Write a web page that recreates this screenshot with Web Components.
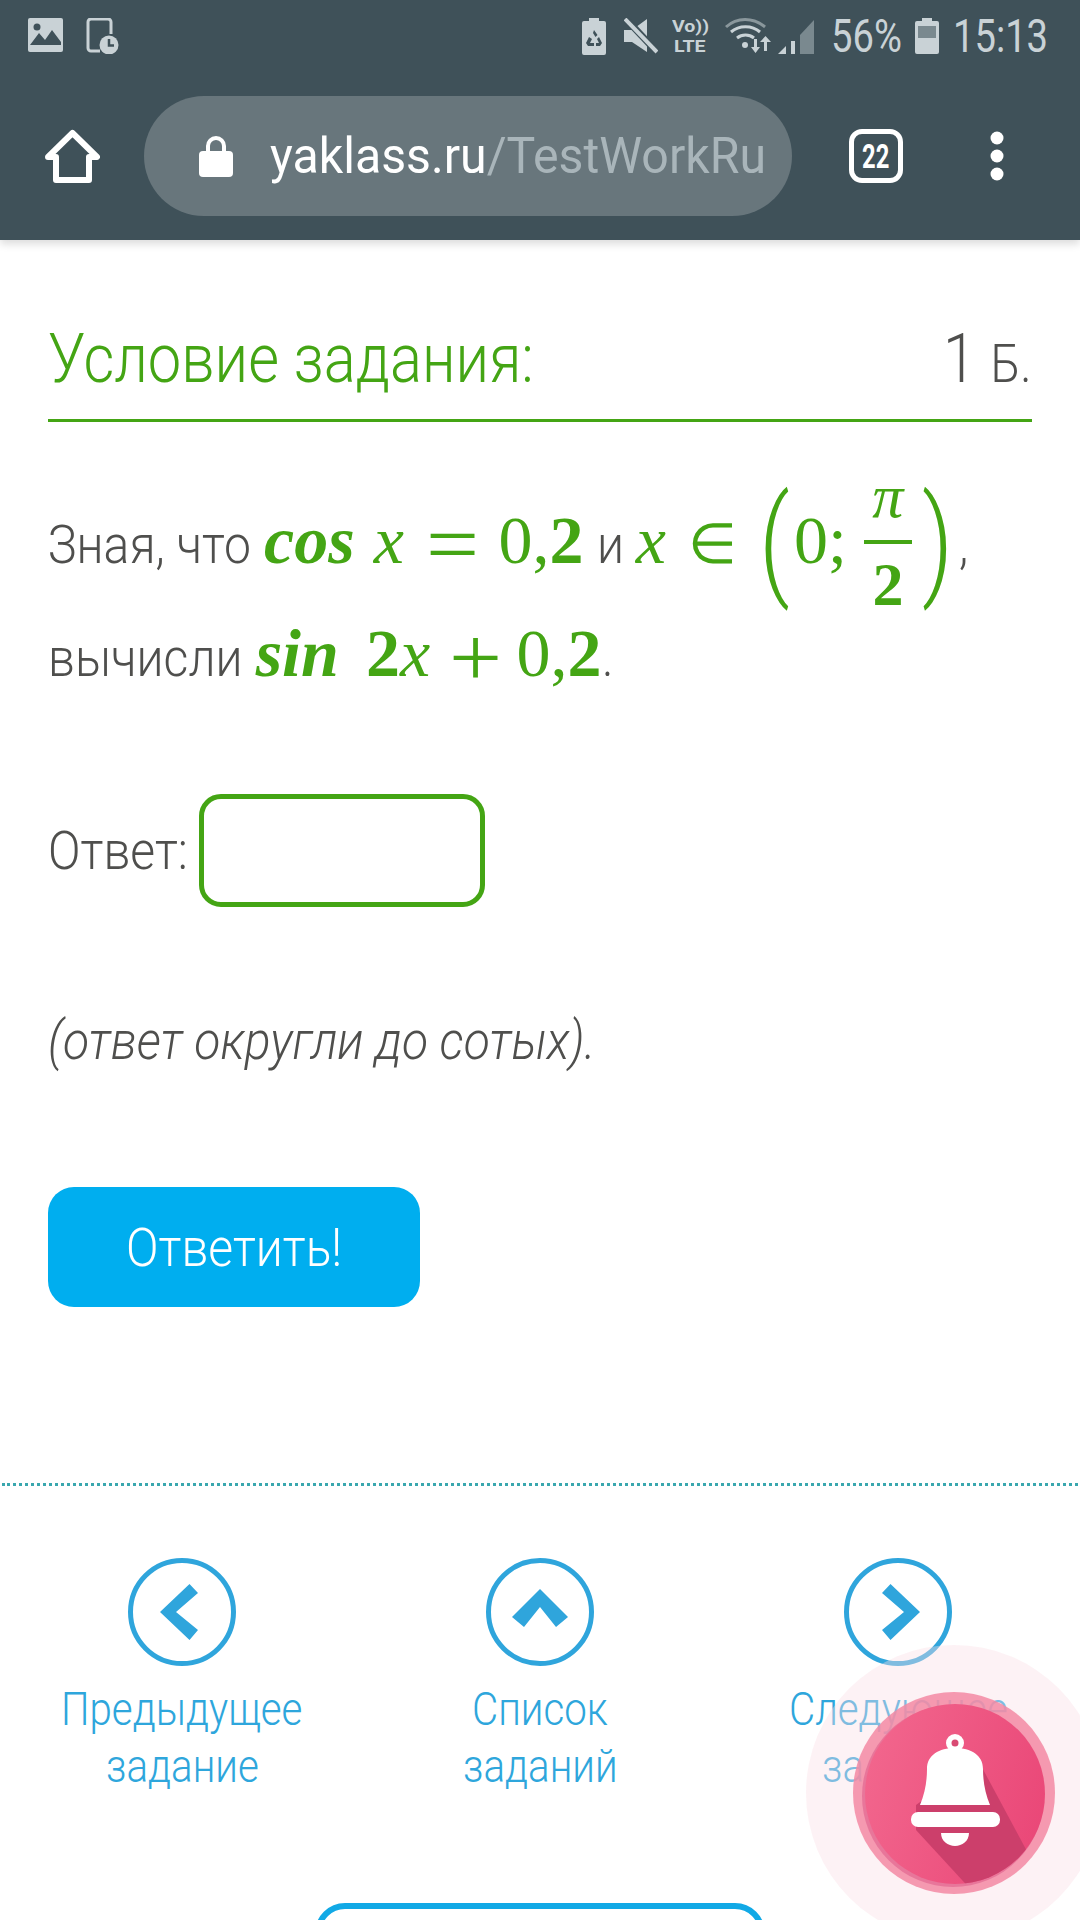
<!DOCTYPE html>
<html lang="ru">
<head>
<meta charset="utf-8">
<title>ЯКласс</title>
<style>
  html, body { margin: 0; padding: 0; background: #fff; }
  body { width: 1080px; height: 1920px; overflow: hidden; position: relative; font-family: Roboto, "Liberation Sans", sans-serif; font-weight: 300; color: #4f4f4d; }
</style>
</head>
<body>

<app-header></app-header>
<task-panel></task-panel>
<task-nav></task-nav>
<notify-bell></notify-bell>

<script>
/* === texto estrecho: the reference font is condensed, so squeeze and keep the real width === */
class NarrowText extends HTMLElement {
  constructor() {
    super();
    this.attachShadow({ mode: 'open' }).innerHTML = `
      <style>
        :host { display: inline-block; white-space: nowrap; }
        span { display: inline-block; transform-origin: 0 50%; transform: scaleX(var(--sx, .8)); }
      </style>
      <span><slot></slot></span>`;
  }
  connectedCallback() {
    const inner = this.shadowRoot.querySelector('span');
    this.style.width = inner.getBoundingClientRect().width + 'px';
  }
}
customElements.define('narrow-text', NarrowText);

/* === cabecera === */
class AppHeader extends HTMLElement {
  constructor() {
    super();
    this.attachShadow({ mode: 'open' }).innerHTML = `
      <style>
        :host { display: block; height: 240px; background: #3f5159; box-shadow: 0 4px 8px rgba(0,0,0,.14); color: #c9d2d6; font-family: Roboto, sans-serif; font-weight: 400; }
        svg { display: block; flex: none; }
        .status { height: 72px; display: flex; align-items: center; padding: 0 32px 0 28px; font-size: 46px; --sx: .83; }
        .status .left { display: flex; gap: 23px; margin-right: auto; }
        .status .right { display: flex; align-items: center; }
        .volte { width: 36px; margin-right: 17px; display: flex; flex-direction: column; align-items: center; font-size: 17px; line-height: 20px; font-weight: 700; --sx: 1.15; }
        .toolbar { height: 168px; display: flex; align-items: center; padding: 0 0 24px 45px; }
        .pill { width: 648px; height: 120px; box-sizing: border-box; margin-left: 44px; padding-left: 55px; border-radius: 60px; background: #68767c; display: flex; align-items: center; overflow: hidden; font-size: 50px; color: #a9b5ba; --sx: .965; }
        .pill b { font-weight: 400; color: #fff; }
        .tabs { width: 54px; height: 54px; box-sizing: border-box; margin-left: 57px; border: 5px solid #fff; border-radius: 13px; display: flex; align-items: center; justify-content: center; color: #fff; font-size: 33px; font-weight: 700; --sx: .72; }
        .dots { margin-left: 87px; }
      </style>
      <div class="status">
        <div class="left">
          <svg width="35" height="34" viewBox="0 0 35 34"><rect width="35" height="34" rx="2" fill="#c9d2d6"/><circle cx="9" cy="9" r="3.500" fill="#3f5159"/><path d="M2 27 L11 15 L17 22 L24 12 L33 24 V30 H2Z" fill="#3f5159"/><rect x="2" y="27" width="31" height="5" fill="#c9d2d6"/></svg>
          <svg width="33" height="36" viewBox="0 0 33 36"><path d="M14 33 H5 a3 3 0 0 1 -3-3 V4 a3 3 0 0 1 3-3 H22 a3 3 0 0 1 3 3 V16" fill="none" stroke="#c9d2d6" stroke-width="3"/><circle cx="23" cy="27" r="9.500" fill="#c9d2d6"/><path d="M23 21 V27.500 H28" fill="none" stroke="#3f5159" stroke-width="2.500"/></svg>
        </div>
        <div class="right">
          <svg width="24" height="37" viewBox="0 0 24 37" style="margin-right:18px"><path d="M7 0 H17 V3 H22 a2 2 0 0 1 2 2 V35 a2 2 0 0 1-2 2 H2 a2 2 0 0 1-2-2 V5 a2 2 0 0 1 2-2 H7Z" fill="#c9d2d6"/><path d="M12 12 L15.500 17 L13.500 19 L11 15 Z M7 19 L10 21 L8 25 H12 V28 H6 L4 25Z M17 19 L20 25 L18 28 H14 V25 H17 L15 21Z" fill="#3f5159"/></svg>
          <svg width="34" height="36" viewBox="0 0 34 36" style="margin-right:14px"><path d="M0 12 H8 L23 1 V34 L8 24 H0Z" fill="#c9d2d6"/><path d="M2 1 L33 34" stroke="#3f5159" stroke-width="7"/><path d="M1 1 L33 34" stroke="#c9d2d6" stroke-width="4"/></svg>
          <div class="volte"><narrow-text>Vo))</narrow-text><narrow-text>LTE</narrow-text></div>
          <svg width="48" height="36" viewBox="0 0 48 36" style="margin-right:5px"><g fill="none" stroke="#c9d2d6"><path d="M1 9 C12 -1 28 -1 40 9" stroke="#8a979c" stroke-width="3"/><path d="M6 14 C14 7 27 7 35 14" stroke-width="3"/><path d="M12 20 C17 16 24 16 29 20" stroke-width="3"/></g><circle cx="20" cy="27" r="3" fill="#c9d2d6"/><path d="M29 21 h3 v8 h3 l-4.500 6 l-4.500-6 h3Z M39 33 h3 v-9 h4 l-5.500-6 l-5.500 6 h4Z" fill="#c9d2d6"/></svg>
          <svg width="36" height="36" viewBox="0 0 36 36" style="margin-right:17px"><path d="M0 36 L8 28 V36Z M13 23 H17 V36 H13Z" fill="#c9d2d6"/><path d="M22 17 L36 2 V36 H22Z" fill="#7a898f"/></svg>
          <narrow-text>56%</narrow-text>
          <svg width="24" height="36" viewBox="0 0 24 36" style="margin:0 14px 0 13px"><path d="M7 0 H17 V3 H22 a2 2 0 0 1 2 2 V34 a2 2 0 0 1-2 2 H2 a2 2 0 0 1-2-2 V5 a2 2 0 0 1 2-2 H7Z" fill="#c9d2d6"/><rect x="3" y="8" width="18" height="12" fill="#7a898f"/></svg>
          <narrow-text>15:13</narrow-text>
        </div>
      </div>
      <div class="toolbar">
        <svg width="55" height="55" viewBox="0 0 55 55"><path d="M27.500 4 L52 28 H44 V51 H11 V28 H3Z" fill="none" stroke="#fff" stroke-width="6" stroke-linejoin="round"/></svg>
        <div class="pill">
          <svg width="34" height="42" viewBox="0 0 34 42" style="margin-right:37px"><path d="M9 18 V11 a8 8 0 0 1 16 0 V18" fill="none" stroke="#fff" stroke-width="4"/><rect y="16" width="34" height="26" rx="4" fill="#fff"/></svg>
          <narrow-text><b>yaklass.ru</b>/TestWorkRu</narrow-text>
        </div>
        <div class="tabs"><narrow-text>22</narrow-text></div>
        <svg class="dots" width="14" height="50" viewBox="0 0 14 50"><circle cx="7" cy="7" r="6.500" fill="#fff"/><circle cx="7" cy="25" r="6.500" fill="#fff"/><circle cx="7" cy="43" r="6.500" fill="#fff"/></svg>
      </div>`;
  }
}
customElements.define('app-header', AppHeader);

/* === condicion de la tarea === */
class TaskPanel extends HTMLElement {
  constructor() {
    super();
    this.attachShadow({ mode: 'open' }).innerHTML = `
      <style>
        :host { display: block; padding: 0 48px; --sx: .89; color: #4f4f4d; font-family: Roboto, sans-serif; font-weight: 300; font-size: 54px; }
        .head { height: 182px; box-sizing: border-box; padding-bottom: 20px; border-bottom: 3px solid #44a514; display: flex; justify-content: space-between; align-items: flex-end; font-size: 68px; color: #44a514; --sx: .877; }
        .head .pts { color: #4f4f4d; }
        .pts small { font-size: 54px; }
        .line { display: block; white-space: nowrap; height: 110px; line-height: 110px; }
        .first { margin-top: 52px; height: 124px; }
        .m { font-family: "Liberation Serif", serif; font-weight: 400; color: #44a514; font-size: 68px; --sx: 1; }
        .i { font-style: italic; }
        .b { font-weight: 700; }
        .op { font-size: 84px; line-height: 0; vertical-align: -10px; --sx: 1.12; }
        .in { font-family: "DejaVu Sans", "Liberation Serif", serif; font-weight: 200; font-size: 56px; --sx: 1; }
        .paren { font-family: Roboto, sans-serif; font-weight: 300; font-size: 120px; line-height: 0; vertical-align: -20px; --sx: .8; }
        .frac { display: inline-flex; flex-direction: column; align-items: center; vertical-align: 46px; margin: 0 10px 0 17px; }
        .frac .num, .frac .den { font-size: 62px; line-height: 44px; }
        .frac hr { width: 48px; height: 4px; border: 0; margin: 22px 0 18px; background: #44a514; }
        .answer { margin-top: 86px; display: flex; align-items: center; gap: 11px; }
        .answer .box { width: 286px; height: 113px; box-sizing: border-box; border: 5px solid #44a514; border-radius: 22px; }
        .hint { margin-top: 104px; font-style: italic; line-height: 60px; }
        .send { margin-top: 116px; width: 372px; height: 120px; border-radius: 26px; background: #00aeef; color: #fff; display: flex; align-items: center; justify-content: center; }
      </style>
      <div class="head">
        <narrow-text>Условие задания:</narrow-text>
        <span class="pts"><narrow-text>1 <small>Б.</small></narrow-text></span>
      </div>
      <div class="line first">
        <narrow-text>Зная, что</narrow-text>
        <narrow-text class="m i b">cos</narrow-text>
        <narrow-text class="m i" style="margin-left:6px">x</narrow-text>
        <narrow-text class="m op" style="margin-left:9px">=</narrow-text>
        <narrow-text class="m" style="margin-left:6px">0,<span class="b">2</span></narrow-text>
        <narrow-text>и</narrow-text>
        <narrow-text class="m i" style="margin-left:-1px">x</narrow-text>
        <narrow-text class="m in" style="margin-left:9px">∈</narrow-text>
        <narrow-text class="m paren" style="margin-left:9px">(</narrow-text><narrow-text class="m" style="margin-left:4px">0;</narrow-text><span class="frac"><narrow-text class="m i num">π</narrow-text><hr><narrow-text class="m b den">2</narrow-text></span><narrow-text class="m paren">)</narrow-text><narrow-text style="margin-left:6px">,</narrow-text>
      </div>
      <div class="line">
        <narrow-text>вычисли</narrow-text>
        <narrow-text class="m i b">sin</narrow-text>
        <narrow-text class="m b" style="margin-left:14px">2</narrow-text><narrow-text class="m i">x</narrow-text>
        <narrow-text class="m op" style="margin-left:6px">+</narrow-text>
        <narrow-text class="m" style="margin-left:1px">0,<span class="b">2</span></narrow-text><narrow-text>.</narrow-text>
      </div>
      <div class="answer"><narrow-text>Ответ:</narrow-text><div class="box"></div></div>
      <div class="hint"><narrow-text>(ответ округли до сотых).</narrow-text></div>
      <div class="send"><narrow-text>Ответить!</narrow-text></div>`;
  }
}
customElements.define('task-panel', TaskPanel);

/* === enlace con circulo === */
class NavLink extends HTMLElement {
  constructor() {
    super();
    this.attachShadow({ mode: 'open' }).innerHTML = `
      <style>
        :host { display: flex; flex-direction: column; align-items: center; color: #2ea6dc; font-size: 46px; line-height: 57px; text-align: center; --sx: .875; }
        .circle { width: 108px; height: 108px; box-sizing: border-box; border: 5px solid #2fa5dc; border-radius: 50%; margin-bottom: 15px; }
      </style>
      <div class="circle"><slot name="icon"></slot></div>
      <slot></slot>`;
  }
}
customElements.define('nav-link', NavLink);

/* === navegacion inferior === */
class TaskNav extends HTMLElement {
  constructor() {
    super();
    this.attachShadow({ mode: 'open' }).innerHTML = `
      <style>
        :host { display: block; font-family: Roboto, sans-serif; font-weight: 300; }
        .dotted { margin: 176px 2px 0; border-top: 3px dotted #39a7ae; }
        .grid { display: grid; grid-template-columns: repeat(3, 1fr); padding: 0 3px; margin-top: 72px; }
        .list { width: 450px; height: 120px; box-sizing: border-box; margin: 108px auto 0; border: 6px solid #11a9e6; border-radius: 30px; }
        svg { display: block; margin: -5px; }
      </style>
      <div class="dotted"></div>
      <div class="grid">
        <nav-link><svg slot="icon" width="108" height="108" viewBox="0 0 108 108"><path d="M32 54 L61.500 26 L70 35 L48 54 L70 72 L61.500 82Z" fill="#2fa5dc"/></svg><narrow-text>Предыдущее</narrow-text><narrow-text>задание</narrow-text></nav-link>
        <nav-link><svg slot="icon" width="108" height="108" viewBox="0 0 108 108"><path d="M54 31 L82 59 L70 69 L54 49 L38 69 L26 59Z" fill="#2fa5dc"/></svg><narrow-text>Список</narrow-text><narrow-text>заданий</narrow-text></nav-link>
        <nav-link><svg slot="icon" width="108" height="108" viewBox="0 0 108 108"><path d="M76 54 L46.500 26 L38 35 L60 54 L38 72 L46.500 82Z" fill="#2fa5dc"/></svg><narrow-text>Следующее</narrow-text><narrow-text>задание</narrow-text></nav-link>
      </div>
      <div class="list"></div>`;
  }
}
customElements.define('task-nav', TaskNav);

/* === campana flotante === */
class NotifyBell extends HTMLElement {
  constructor() {
    super();
    this.attachShadow({ mode: 'open' }).innerHTML = `
      <style>
        :host { position: absolute; left: 804px; top: 1643px; width: 300px; height: 300px; display: block; }
        svg { display: block; }
      </style>
      <svg width="300" height="300" viewBox="0 0 300 300">
        <defs>
          <linearGradient id="g" x1="0" y1="0.3" x2="1" y2="0.6"><stop offset="0" stop-color="#f2668d"/><stop offset="1" stop-color="#ea4878"/></linearGradient>
          <clipPath id="c"><circle cx="151" cy="151" r="90"/></clipPath>
        </defs>
        <circle cx="150" cy="150" r="148" fill="#fbdfe5" fill-opacity=".4"/>
        <circle cx="150" cy="150" r="101" fill="#f38aa3" fill-opacity=".85"/>
        <circle cx="149" cy="153" r="91" fill="#e8769a"/>
        <circle cx="151" cy="151" r="90" fill="url(#g)"/>
        <path clip-path="url(#c)" d="M174 117 L240 240 L170 250 L112 187 L112 162 Z" fill="#cc3f6b"/>
        <circle cx="151" cy="100" r="9" fill="#fff"/><circle cx="151" cy="100" r="3.500" fill="#d94a73"/>
        <path d="M116 162 C121 150 123 138 123 126 C123 112 135 105 151 105 C167 105 179 112 179 126 C179 138 181 150 186 162Z" fill="#fff"/>
        <rect x="107" y="169" width="89" height="15" rx="7" fill="#fff"/>
        <path d="M137 190 H165 C165 198 158 203 151 203 C144 203 137 198 137 190Z" fill="#fff"/>
      </svg>`;
  }
}
customElements.define('notify-bell', NotifyBell);
</script>
</body>
</html>
